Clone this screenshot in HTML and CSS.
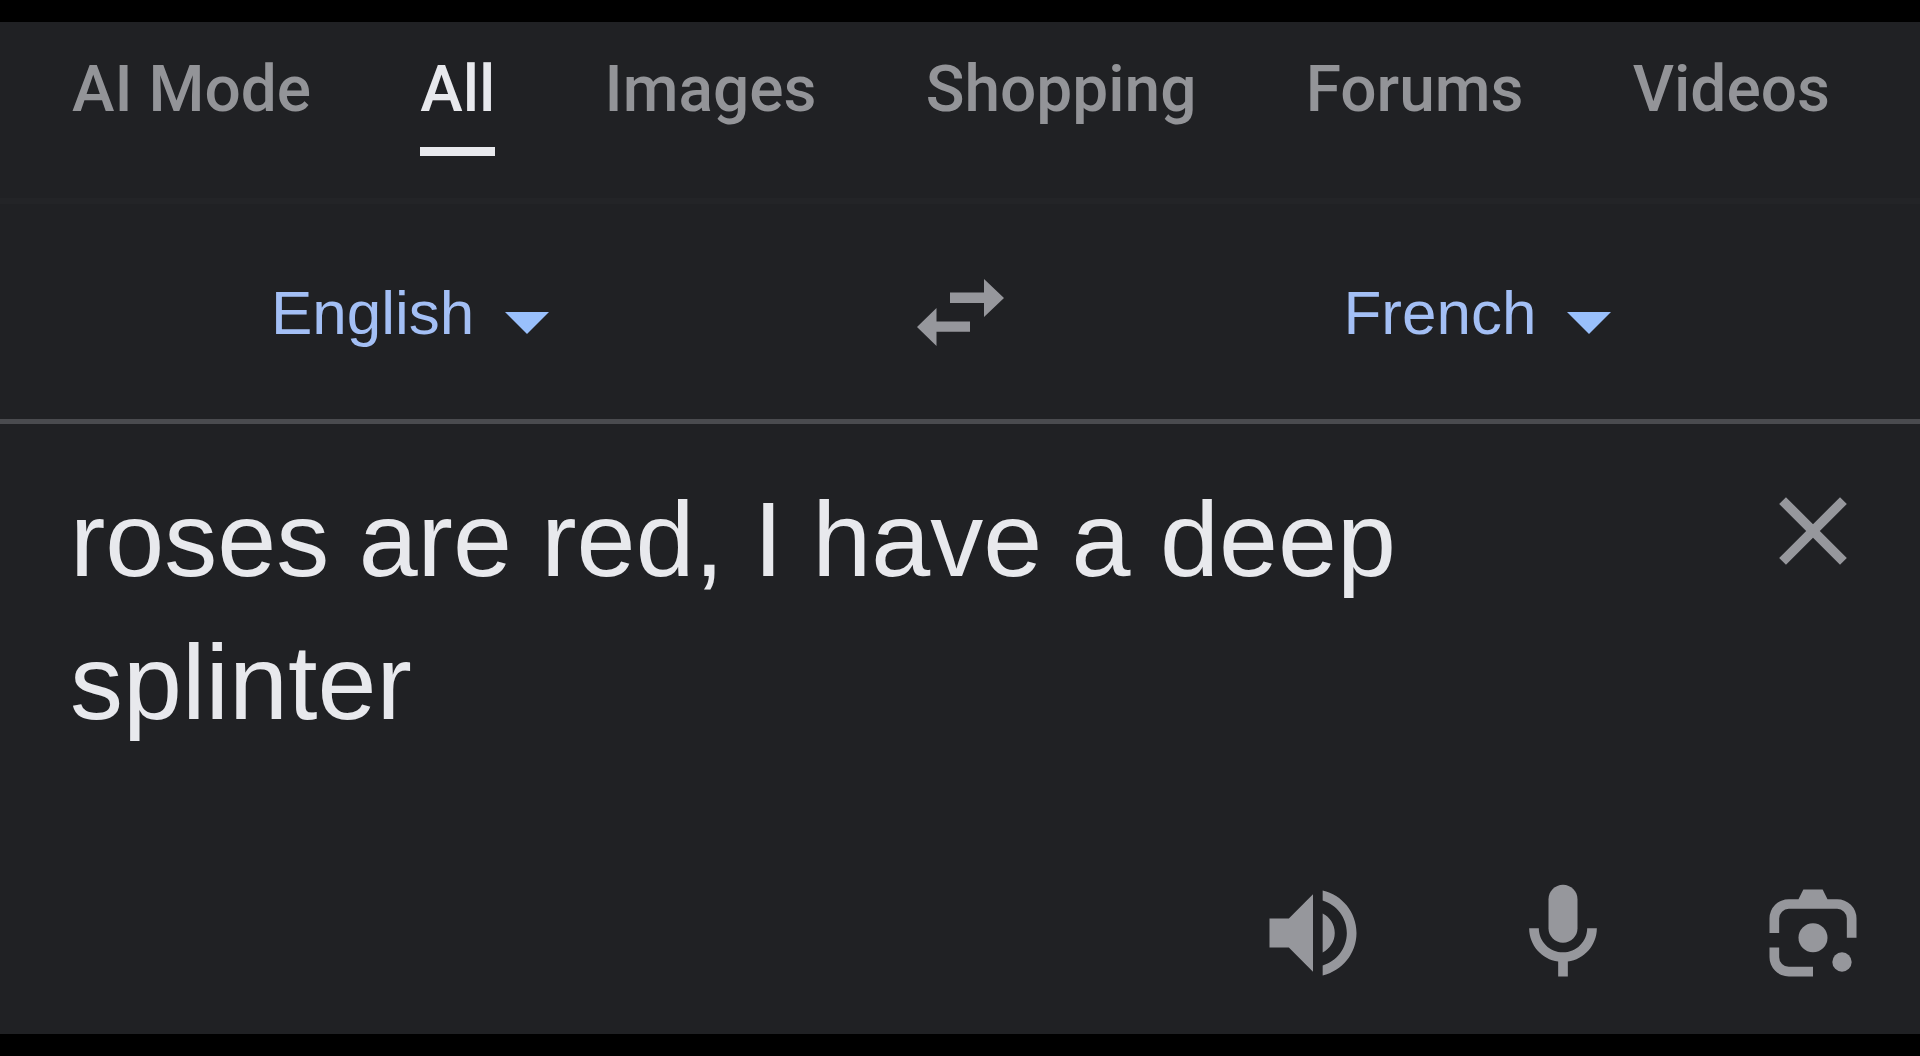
FILE: index.html
```
<!DOCTYPE html>
<html lang="en">
<head>
    <meta charset="UTF-8">
    <meta name="viewport" content="width=device-width, initial-scale=1.0">
    <title>Translate</title>
    <link rel="stylesheet" href="styles.css">
</head>
<body>
    <main class="panel">
        <nav class="tabs">
            <a class="tab" href="#">AI Mode</a>
            <a class="tab active" href="#" aria-current="page">All</a>
            <a class="tab" href="#">Images</a>
            <a class="tab" href="#">Shopping</a>
            <a class="tab" href="#">Forums</a>
            <a class="tab" href="#">Videos</a>
        </nav>

        <div class="languages">
            <div class="language">
                <select class="language-select" id="source-lang" aria-label="Source language">
                    <option>English</option>
                </select>
                <svg class="arrow" viewBox="0 0 44 44"><path d="M0 21h44L22 43z"/></svg>
            </div>
            <button class="swap-btn" type="button" aria-label="Swap languages">
                <svg class="swap-icon" viewBox="0 0 87 67">
                    <path d="M33 13.5h34V0l20 19-20 19V24H33z"/>
                    <path d="M53 42.5v10.3H19.5V67L0 48l19.5-19v13.5z"/>
                </svg>
            </button>
            <div class="language target">
                <select class="language-select" id="target-lang" aria-label="Target language">
                    <option>French</option>
                </select>
                <svg class="arrow" viewBox="0 0 44 44"><path d="M0 21h44L22 43z"/></svg>
            </div>
        </div>

        <div class="source">
            <textarea class="source-text" rows="2" spellcheck="false" aria-label="Source text">roses are red, I have a deep splinter</textarea>
            <button class="icon-btn" type="button" aria-label="Clear text">
                <svg class="icon" viewBox="0 0 24 24"><path d="M19 6.41L17.59 5 12 10.59 6.41 5 5 6.41 10.59 12 5 17.59 6.41 19 12 13.41 17.59 19 19 17.59 13.41 12z"/></svg>
            </button>
        </div>

        <div class="tools">
            <button class="icon-btn" type="button" aria-label="Listen">
                <svg class="icon" viewBox="0 0 24 24"><path d="M3 9v6h4l5 5V4L7 9H3zm13.5 3c0-1.77-1.02-3.29-2.5-4.03v8.05c1.48-.73 2.5-2.25 2.5-4.02zM14 3.23v2.06c2.89.86 5 3.54 5 6.71s-2.11 5.85-5 6.71v2.06c4.01-.91 7-4.49 7-8.77s-2.99-7.86-7-8.77z"/></svg>
            </button>
            <button class="icon-btn" type="button" aria-label="Speak">
                <svg class="icon" viewBox="0 0 24 24"><path d="M12 14c1.66 0 3-1.34 3-3V5c0-1.66-1.34-3-3-3S9 3.34 9 5v6c0 1.66 1.34 3 3 3z"/><path d="M17 11c0 2.76-2.24 5-5 5s-5-2.24-5-5H5c0 3.53 2.61 6.43 6 6.92V21h2v-3.08c3.39-.49 6-3.39 6-6.92h-2z"/></svg>
            </button>
            <button class="icon-btn" type="button" aria-label="Translate an image">
                <svg class="icon" viewBox="0 0 24 24">
                    <path d="M3 12V9a4 4 0 0 1 4-4h2l1-2h4l1 2h2a4 4 0 0 1 4 4v4h-2V9a2 2 0 0 0-2-2H7a2 2 0 0 0-2 2v3z"/>
                    <path d="M3 15h2v2a2 2 0 0 0 2 2h5v2H7a4 4 0 0 1-4-4z"/>
                    <circle cx="12" cy="13" r="3"/>
                    <circle cx="18" cy="18" r="2"/>
                </svg>
            </button>
        </div>
    </main>
</body>
</html>
```

FILE: styles.css
```
* {
    box-sizing: border-box;
}

body {
    margin: 0;
    padding: 22px 0;
    min-height: 100vh;
    display: flex;
    background-color: #000000;
    font-family: "Liberation Sans", Arial, sans-serif;
}

button,
select,
textarea {
    margin: 0;
    padding: 0;
    border: none;
    background: none;
    font-family: inherit;
    outline: none;
}

svg {
    display: block;
    fill: #96979c;
}

.panel {
    flex: 1;
    display: flex;
    flex-direction: column;
    background-color: #202124;
}

/* Search tabs */
.tabs {
    display: flex;
    justify-content: space-between;
    padding: 32px 90px 42px 72px;
    border-bottom: 6px solid #232427;
}

.tab {
    padding-bottom: 21px;
    border-bottom: 9px solid transparent;
    color: #939498;
    font-family: Roboto, sans-serif;
    font-size: 64px;
    font-weight: 500;
    line-height: 72px;
    text-decoration: none;
    white-space: nowrap;
}

.tab.active {
    color: #e8e9ed;
    border-bottom-color: #e8e9ed;
}

/* Language bar */
.languages {
    display: grid;
    grid-template-columns: 1fr 280px 1fr;
    align-items: center;
    height: 220px;
    padding-top: 2px;
    border-bottom: 5px solid #4a4b4f;
}

.language {
    display: flex;
    justify-content: center;
    align-items: center;
    gap: 30px;
}

.language.target {
    padding-right: 66px;
}

.language-select {
    appearance: none;
    color: #a3bff5;
    font-size: 62px;
    line-height: 72px;
    cursor: pointer;
}

.arrow {
    width: 44px;
    height: 44px;
    fill: #99c0fc;
}

.swap-btn {
    justify-self: center;
    cursor: pointer;
}

.swap-icon {
    width: 87px;
    height: 67px;
}

/* Text to translate */
.source {
    display: flex;
    align-items: flex-start;
    justify-content: space-between;
    padding: 44px 49px 0 70px;
}

.source-text {
    flex: 1;
    max-width: 1500px;
    color: #e8e9ed;
    font-size: 106px;
    line-height: 143px;
    resize: none;
    overflow: hidden;
}

.icon-btn {
    cursor: pointer;
}

.source .icon-btn {
    margin-top: 5px;
}

.icon {
    width: 116px;
    height: 116px;
}

.tools {
    display: flex;
    justify-content: flex-end;
    gap: 134px;
    margin-top: auto;
    padding: 0 49px 43px;
}
```
